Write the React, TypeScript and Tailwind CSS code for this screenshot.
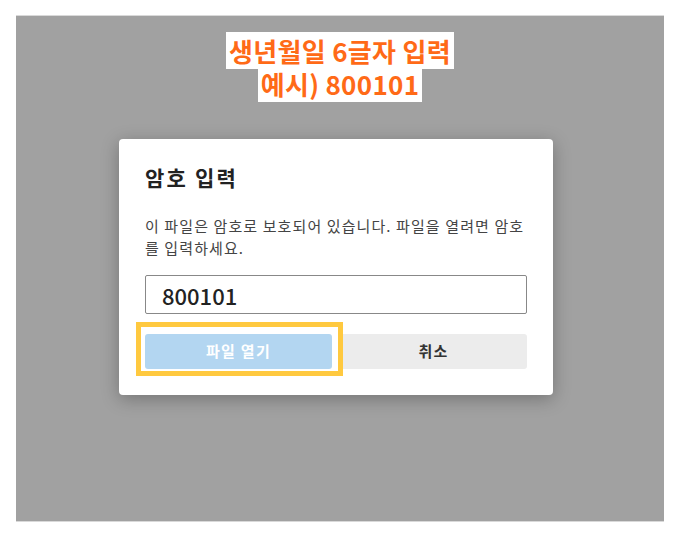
import { useState } from 'react';

const FONT = '"Noto Sans CJK KR", "Noto Sans", sans-serif';

export default function App() {
  const [password, setPassword] = useState('800101');

  return (
    <div className="min-h-[534px] bg-white pl-4 pr-[14px] pt-[15px]" style={{ fontFamily: FONT }}>
      <div className="flex h-[507px] flex-col items-center border-y border-[#d9d9d9] bg-[#a1a1a1] pt-[18px]">
        {/* Guide label */}
        <div className="text-center text-[26px] font-bold leading-[33px] tracking-[0.3px] text-[#ff6a17]">
          <span className="bg-white px-[3px]">생년월일 6글자 입력</span>
          <br />
          <span className="bg-white px-[3px]">예시) 800101</span>
        </div>

        {/* Password dialog */}
        <div className="mr-2 mt-[39px] w-[434px] rounded-[4px] bg-white px-[26px] pb-[26px] pt-6 shadow-[0_4px_18px_rgba(0,0,0,0.28)]">
          <h2 className="text-[21px] font-bold leading-[28px] tracking-[2.2px] text-[#222]">암호 입력</h2>
          <p className="mt-6 text-[15px] leading-[22px] tracking-[1.1px] text-[#444]">
            이 파일은 암호로 보호되어 있습니다. 파일을 열려면 암호를 입력하세요.
          </p>
          <input
            type="text"
            value={password}
            onChange={(e) => setPassword(e.target.value)}
            className="mt-4 h-[39px] w-full rounded-[2px] border border-[#888] px-4 text-[22px] font-medium text-[#222] outline-none"
          />
          <div className="mt-5 flex gap-2">
            <div className="relative flex-1">
              <button
                type="button"
                className="h-[35px] w-full rounded-[3px] bg-[#b3d6f1] text-[15px] font-bold tracking-[1.3px] text-white"
              >
                파일 열기
              </button>
              <span className="pointer-events-none absolute -bottom-[7px] -left-[9px] -right-[11px] -top-[12px] border-[5px] border-[#ffc93f]" />
            </div>
            <button
              type="button"
              className="h-[35px] flex-1 rounded-[3px] bg-[#ececec] text-[15px] font-bold tracking-[1.3px] text-[#333]"
            >
              취소
            </button>
          </div>
        </div>
      </div>
    </div>
  );
}
